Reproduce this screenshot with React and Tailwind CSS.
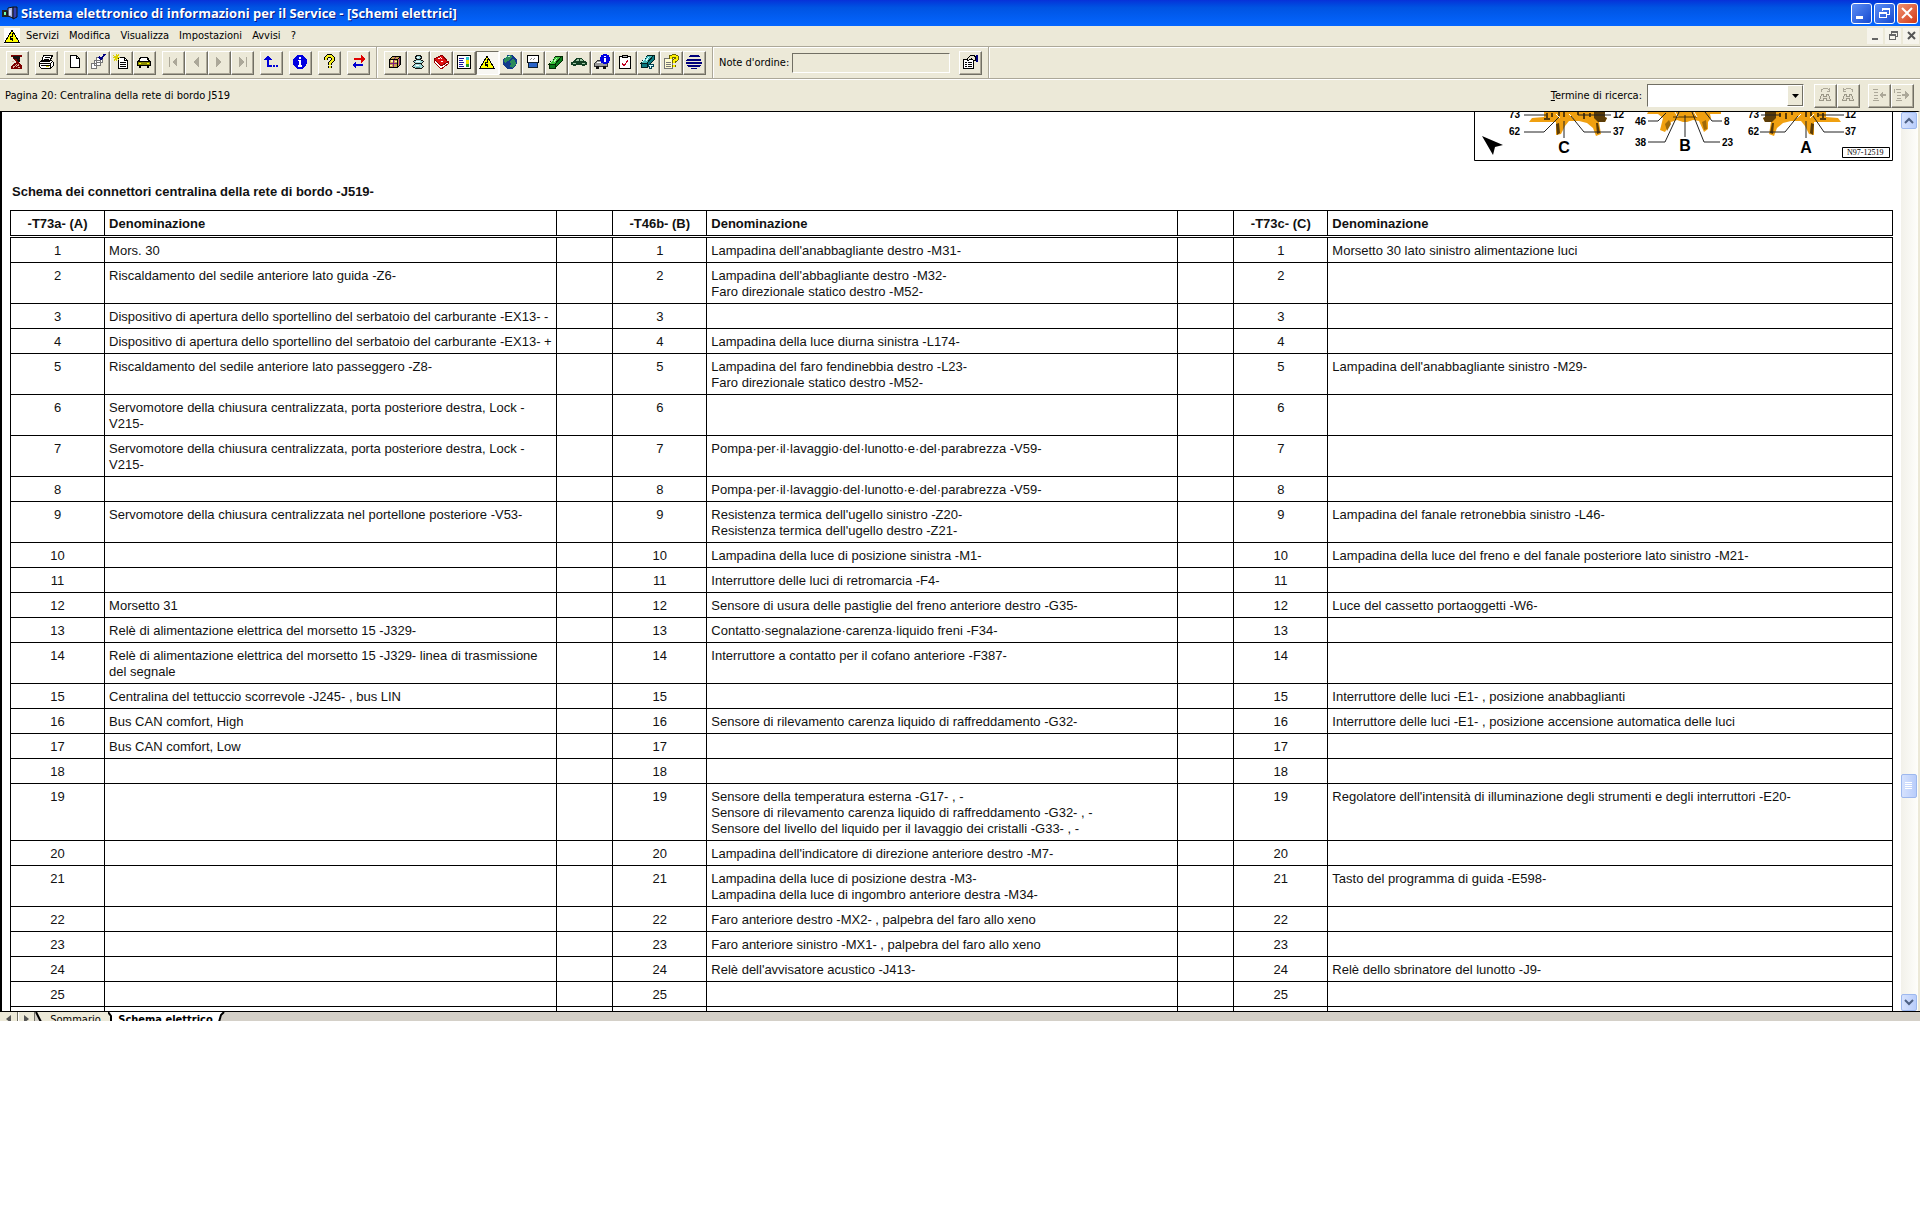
import clsx from 'clsx'

const rows = [
  ['1', ['Mors. 30'], ["Lampadina dell'anabbagliante destro -M31-"], ['Morsetto 30 lato sinistro alimentazione luci']],
  ['2', ['Riscaldamento del sedile anteriore lato guida -Z6-'], ["Lampadina dell'abbagliante destro -M32-", 'Faro direzionale statico destro -M52-'], []],
  ['3', ['Dispositivo di apertura dello sportellino del serbatoio del carburante -EX13- -'], [], []],
  ['4', ['Dispositivo di apertura dello sportellino del serbatoio del carburante -EX13- +'], ['Lampadina della luce diurna sinistra -L174-'], []],
  ['5', ['Riscaldamento del sedile anteriore lato passeggero -Z8-'], ['Lampadina del faro fendinebbia destro -L23-', 'Faro direzionale statico destro -M52-'], ["Lampadina dell'anabbagliante sinistro -M29-"]],
  ['6', ['Servomotore della chiusura centralizzata, porta posteriore destra, Lock -', 'V215-'], [], []],
  ['7', ['Servomotore della chiusura centralizzata, porta posteriore destra, Lock -', 'V215-'], ['Pompa·per·il·lavaggio·del·lunotto·e·del·parabrezza -V59-'], []],
  ['8', [], ['Pompa·per·il·lavaggio·del·lunotto·e·del·parabrezza -V59-'], []],
  ['9', ['Servomotore della chiusura centralizzata nel portellone posteriore -V53-'], ["Resistenza termica dell'ugello sinistro -Z20-", "Resistenza termica dell'ugello destro -Z21-"], ['Lampadina del fanale retronebbia sinistro -L46-']],
  ['10', [], ['Lampadina della luce di posizione sinistra -M1-'], ['Lampadina della luce del freno e del fanale posteriore lato sinistro -M21-']],
  ['11', [], ['Interruttore delle luci di retromarcia -F4-'], []],
  ['12', ['Morsetto 31'], ['Sensore di usura delle pastiglie del freno anteriore destro -G35-'], ['Luce del cassetto portaoggetti -W6-']],
  ['13', ['Relè di alimentazione elettrica del morsetto 15 -J329-'], ['Contatto·segnalazione·carenza·liquido freni -F34-'], []],
  ['14', ['Relè di alimentazione elettrica del morsetto 15 -J329- linea di trasmissione', 'del segnale'], ['Interruttore a contatto per il cofano anteriore -F387-'], []],
  ['15', ['Centralina del tettuccio scorrevole -J245- , bus LIN'], [], ['Interruttore delle luci -E1- , posizione anabbaglianti']],
  ['16', ['Bus CAN comfort, High'], ['Sensore di rilevamento carenza liquido di raffreddamento -G32-'], ['Interruttore delle luci -E1- , posizione accensione automatica delle luci']],
  ['17', ['Bus CAN comfort, Low'], [], []],
  ['18', [], [], []],
  ['19', [], ['Sensore della temperatura esterna -G17- , -', 'Sensore di rilevamento carenza liquido di raffreddamento -G32- , -', 'Sensore del livello del liquido per il lavaggio dei cristalli -G33- , -'], ["Regolatore dell'intensità di illuminazione degli strumenti e degli interruttori -E20-"]],
  ['20', [], ["Lampadina dell'indicatore di direzione anteriore destro -M7-"], []],
  ['21', [], ['Lampadina della luce di posizione destra -M3-', 'Lampadina della luce di ingombro anteriore destra -M34-'], ['Tasto del programma di guida -E598-']],
  ['22', [], ['Faro anteriore destro -MX2- , palpebra del faro allo xeno'], []],
  ['23', [], ['Faro anteriore sinistro -MX1- , palpebra del faro allo xeno'], []],
  ['24', [], ["Relè dell'avvisatore acustico -J413-"], ['Relè dello sbrinatore del lunotto -J9-']],
  ['25', [], [], []],
]

const icons = {
  exit: (
    <>
      <path d="M2 1h11v2h-2v2l-2 3 2 2 2 2v3H2v-3l4-3 1-1-3-3V3H2z" fill="#7b0000" />
      <path d="M4 2h7v3L9 6 4 4zM8 6h3v2H9z" fill="#111" />
      <path d="M3 7.500h2M10 10.500L7 13M4 13.500l4-3M9 13.500h2" stroke="#ddb0a0" />
    </>
  ),
  print: (
    <>
      <path d="M5.500 1.500h9l-3 6h-8zM1.500 8.500l3-2h9l2 2v3l-3 3h-9l-2-2z" fill="#fff" stroke="#000" />
      <path d="M7 3.500h5M6 5.500h5M2 9.500h10l3-2M3 11.500h9M12.500 9v5" stroke="#000" fill="none" />
      <path d="M8 12.500h3" stroke="#cc0" />
    </>
  ),
  page: <path d="M3.500 1.500h6l3 3v9h-9zM9.500 1.500v3h3" fill="#fff" stroke="#000" />,
  stack: (
    <>
      <path d="M6.500 3.500h6v5h-6zM4.500 6.500h6v5h-6zM1.500 9.500h5v5h-5z" fill="#fff" stroke="#777" />
      <path d="M9 3l2 2 4-5" stroke="#000080" strokeWidth="2" fill="none" />
    </>
  ),
  newDoc: (
    <>
      <path d="M5.500 3.500h6l3 3v8h-9z" fill="#fff" stroke="#000" />
      <path d="M11.500 3.500v3h3M7 8.500h6M7 10.500h6M7 12.500h6" stroke="#000" fill="none" />
      <path d="M0 1l6 5M6 0L1 7M3.500 0v7M0 3.500h7" stroke="#dcd000" />
    </>
  ),
  car: (
    <>
      <path d="M4 3h8l2 4h1v5h-2v2h-2v-2H5v2H3v-2H1V7h1z" fill="#000" />
      <path d="M5 4h6l1 3H4z" fill="#fff" />
      <path d="M2 8h12v3H2z" fill="#8a8a00" />
      <path d="M3 9.500h2M11 9.500h2" stroke="#ff0" />
    </>
  ),
  first: <path d="M4 3h1v10H4zM12 3v10L7 8z" fill="#aca899" />,
  prev: <path d="M11 3v10L5 8z" fill="#aca899" />,
  next: <path d="M5 3l6 5-6 5z" fill="#aca899" />,
  last: <path d="M12 3h1v10h-1zM5 3l5 5-5 5z" fill="#aca899" />,
  up: (
    <>
      <path d="M5 5v7h4" stroke="#0000d8" strokeWidth="2" fill="none" />
      <path d="M1 6l4-5 4 5zM10 11h2v2h-2zM13 11h2v2h-2z" fill="#0000d8" />
    </>
  ),
  info: (
    <>
      <circle cx="8" cy="8" r="7" fill="#0000e0" />
      <path d="M7 3h2v2H7zM6 6h3v5h1v2H6v-2h1V7H6z" fill="#fff" />
    </>
  ),
  help: (
    <>
      <path d="M5 6V4l2-2h3l2 2v2l-3 3v2M9 12v2" stroke="#000" strokeWidth="4" fill="none" />
      <path d="M5 6V4l2-2h3l2 2v2l-3 3v2M9 12v2" stroke="#f5ee20" strokeWidth="2" fill="none" />
    </>
  ),
  swap: (
    <>
      <path d="M4 4h7V1l4 4-4 4V6H4z" fill="#e00000" />
      <path d="M13 10H6V8l-4 3 4 4v-3h7z" fill="#0000d0" />
    </>
  ),
  box: (
    <>
      <path d="M2.500 5.500l3-3h8v8l-3 3h-8z" fill="#c9a04e" stroke="#000" />
      <path d="M2.500 5.500h8v8M10.500 5.500l3-3" stroke="#000" fill="none" />
      <path d="M3 9.500h7M6.500 6v7M9 3L6.500 5.500M12.500 4v7" stroke="#7d1c7d" />
      <path d="M4 6h2v2H4zM8 7h2v1H8zM3 11h2v1H3z" fill="#fff6b0" />
    </>
  ),
  person: (
    <>
      <path d="M6.500 1.500h4l1 2-1 2h-4l-1-2zM3.500 7.500l3-2h4l3 2-2 2h-6zM5.500 9.500h5l3 3-2 2h-6l-3-2z" fill="#9fd8d8" stroke="#111" />
      <path d="M6 7.500h4M6 11.500h3M7 3.500h2" stroke="#fff" />
      <path d="M6 13.500h4" stroke="#4d9090" />
    </>
  ),
  book: (
    <>
      <path d="M1 5v3l7 7 7-5V8l-7 4z" fill="#fff" stroke="#a00000" />
      <path d="M1 5l8-4 6 7-7 4z" fill="#e01010" stroke="#800" />
      <path d="M5 5l2-1M8 8l2-1M7 3l2 2" stroke="#fff" />
    </>
  ),
  list: (
    <>
      <path d="M1.500 1.500h13v13h-13z" fill="#fff" stroke="#000" />
      <path d="M3 4.500h5M3 6.500h4M3 8.500h5M3 10.500h4M3 12.500h5" stroke="#1a1aa0" />
      <path d="M10 3h3v3h-3z" fill="#2cc7c7" />
      <path d="M10 6h3v4h-3z" fill="#efe600" />
      <path d="M10 10h3v3h-3z" fill="#1c9b2c" />
    </>
  ),
  warning: (
    <>
      <path d="M8 2l7 12H1z" fill="#ffff00" stroke="#000" />
      <path d="M8.500 5v3h-2v2h2v3M6 11.500h3" stroke="#000" fill="none" />
    </>
  ),
  globe: (
    <>
      <circle cx="8" cy="8" r="7" fill="#123a8c" />
      <path d="M4 3l4-2 2 2-2 3-3 1-1 3-2-2V6zM10 5l3 1 1 4-3 4-3-1 1-3-2-2z" fill="#2c8c5a" />
      <path d="M3 4l2-2M6 2.500h2" stroke="#bff0e0" />
    </>
  ),
  monitor: (
    <>
      <path d="M2.500 1.500h11v7h-11z" fill="#fff" stroke="#000" />
      <path d="M3.500 8.500h9v5h-9z" fill="#2a64c8" stroke="#123" />
      <path d="M5 6l2-2M8 6l2-2" stroke="#888" />
    </>
  ),
  greenBook: (
    <>
      <path d="M1 10l7-8h6l-7 8z" fill="#3cc43c" stroke="#022b02" />
      <path d="M1 10h6v4H1zM7 10l7-8 1 4-8 8z" fill="#0b7a1b" stroke="#022b02" />
      <path d="M6 4l-4 5M9 4l-3 4" stroke="#c7f0c0" />
    </>
  ),
  greenCar: (
    <>
      <path d="M0 8l3-1 2-3h6l2 3 3 1v3h-2v1h-3v-1H5v1H2v-1H0z" fill="#123f22" />
      <path d="M6 5h2v2H5zM9 5h2l1 2H9zM2 9h3v1H2zM11 9h3v1h-3z" fill="#9fc6a5" />
    </>
  ),
  carInfo: (
    <>
      <path d="M.5 9.500l3-3h6l4 3v3H.5z" fill="#999" stroke="#333" />
      <path d="M2 12h3v3H2zM9 12h3v3H9z" fill="#111" />
      <path d="M3 8.500h5" stroke="#fff" />
      <circle cx="11" cy="5" r="5" fill="#0000e0" />
      <path d="M10 2h2v1h-2zM10 4h2v4h-2z" fill="#fff" />
    </>
  ),
  checklist: (
    <>
      <path d="M2.500 2.500h11v12h-11z" fill="#fff" stroke="#000" />
      <path d="M5.500 1.500h5v2h-5z" fill="#bbb" stroke="#000" />
      <path d="M5 9l2 3 4-6" stroke="#c00020" fill="none" />
    </>
  ),
  tealBook: (
    <>
      <path d="M1 9l7-8h6l-7 8z" fill="#46b8b8" stroke="#022" />
      <path d="M1 9h6v4H1zM7 9l7-8 1 4-8 8z" fill="#0a7a80" stroke="#022" />
      <path d="M6 3L2 8M9 3L6 7" stroke="#d7ffff" />
      <path d="M8.500 10.500h5v2h-2v2h-2v-2h-1z" fill="#dff" stroke="#045" />
    </>
  ),
  helpDoc: (
    <>
      <path d="M1.500 4.500h8v10h-8z" fill="#fffbd0" stroke="#777" />
      <path d="M3 8.500h5M3 10.500h5M3 12.500h5" stroke="#777" />
      <path d="M8 5V3l2-1h2l2 1v2l-3 2v2M11 11v2" stroke="#6b6400" strokeWidth="4" fill="none" />
      <path d="M8 5V3l2-1h2l2 1v2l-3 2v2M11 11v2" stroke="#fff200" strokeWidth="2" fill="none" />
    </>
  ),
  stripes: <path d="M4 1h8l2 2H2zM1 5h14v2H0zM0 8h16v2H0zM1 11h14l-1 2H2zM4 14h8l-2 1H6z" fill="#00007c" />,
  note: (
    <>
      <path d="M1.500 5.500h10v9h-10z" fill="#fff" stroke="#000" />
      <path d="M3 8.500h2M6 8.500h4M3 10.500h2M6 10.500h4M3 12.500h2M6 12.500h4" stroke="#000" />
      <path d="M4.500 5.500l4-4h4l1 2v3h-2l-2-2-3 2z" fill="#e8e4d0" stroke="#000" />
      <path d="M14 1h2v7h-2z" fill="#000080" />
    </>
  ),
  findNext: (
    <>
      <path d="M4.500 5V3l2-1.500h4l2 1.500M12.500 1v3.500H10" stroke="#aca899" fill="none" />
      <path d="M4.500 7.500h2v2h3v-2h2l2 6h-4v-2h-3v2h-4z" fill="#e4e0d0" stroke="#9c9888" />
    </>
  ),
  findPrev: (
    <>
      <path d="M12.500 5V3l-2-1.500h-4L4 3M3.500 1v3.500H6" stroke="#aca899" fill="none" />
      <path d="M4.500 7.500h2v2h3v-2h2l2 6h-4v-2h-3v2h-4z" fill="#e4e0d0" stroke="#9c9888" />
    </>
  ),
  outdent: (
    <>
      <path d="M2 2.500h5M3 5.500h4M3 8.500h4M3 11.500h4M2 13.500h6" stroke="#aca899" />
      <path d="M8 8l4-4v3h3v2h-3v3z" fill="#aca899" />
    </>
  ),
  indent: (
    <>
      <path d="M2 2.500h5M3 5.500h4M3 8.500h4M3 11.500h4M2 13.500h6M.5 2v4" stroke="#aca899" />
      <path d="M15 8l-4-4v3H8v2h3v3z" fill="#aca899" />
    </>
  ),
}

const mainGroups = [
  [['exit', 'Esci']],
  [['print', 'Stampa']],
  [['page', 'Nuovo'], ['stack', 'Selezione'], ['newDoc', 'Nuovo documento'], ['car', 'Veicolo']],
  [['first', 'Primo'], ['prev', 'Precedente'], ['next', 'Successivo'], ['last', 'Ultimo']],
  [['up', 'Livello superiore']],
  [['info', 'Informazioni']],
  [['help', 'Guida']],
  [['swap', 'Scambia']],
]

const serviceButtons = [
  ['box', 'Ricambi'],
  ['person', 'Cliente'],
  ['book', 'Manuale'],
  ['list', 'Elenco'],
  ['warning', 'Schemi elettrici'],
  ['globe', 'Rete'],
  ['monitor', 'Diagnosi'],
  ['greenBook', 'Riparazioni'],
  ['greenCar', 'Carrozzeria'],
  ['carInfo', 'Dati veicolo'],
  ['checklist', 'Manutenzione'],
  ['tealBook', 'Attrezzi'],
  ['helpDoc', 'Assistenza'],
  ['stripes', 'Altro'],
]

function Icon({ name }) {
  return (
    <svg viewBox="0 0 16 16" className="w-4 h-4 shrink-0" shapeRendering="crispEdges" aria-hidden="true">
      {icons[name]}
    </svg>
  )
}

function ToolButton({ icon, label, pressed }) {
  return (
    <button
      aria-label={label}
      className={clsx(
        'w-[23px] h-6 flex items-center pl-[2px] pb-[2px] border shrink-0',
        pressed
          ? 'bg-[#f8f7f2] border-t-[#716f64] border-l-[#716f64] border-r-white border-b-white'
          : 'bg-[#ece9d8] border-t-white border-l-white border-r-[#716f64] border-b-[#716f64] shadow-[inset_-1px_-1px_0_#aca899]',
      )}
    >
      <Icon name={icon} />
    </button>
  )
}

function Separator() {
  return <div className="w-[2px] self-stretch bg-white border-l border-[#aca899] shrink-0" />
}

function TitleBar() {
  const box = 'w-[21px] h-[21px] rounded-[3px] border border-white flex items-center justify-center'
  return (
    <div className="h-[26px] flex items-center pl-[2px] pr-[2px] bg-linear-to-b from-[#0831d9] via-[#0054e3] via-30% to-[#0566ff]">
      <svg viewBox="0 0 16 16" className="w-4 h-4" aria-hidden="true">
        <path d="M0 5h5l2 3v4H0z" fill="#222" />
        <path d="M2 7h2v3H2z" fill="#7fa" />
        <path d="M6 3l5-1v11l-5-2z" fill="#aab4e8" stroke="#111" />
        <path d="M11 2h4v10l-4 2z" fill="#3340b0" stroke="#111" />
        <path d="M8 5v5" stroke="#fff" />
      </svg>
      <h1 className="ml-[3px] text-white text-[13px] leading-5 font-bold font-['Open_Sans','Noto_Sans',sans-serif] [text-shadow:1px_1px_0_#0a1883]">
        Sistema elettronico di informazioni per il Service - [Schemi elettrici]
      </h1>
      <div className="ml-auto flex gap-[2px]">
        <button aria-label="Riduci a icona" className={clsx(box, 'bg-linear-to-br from-[#5c8df5] to-[#1648d0]')}>
          <svg viewBox="0 0 19 19" className="w-[19px] h-[19px]"><path d="M4 12h7v3H4z" fill="#fff" /></svg>
        </button>
        <button aria-label="Ripristina" className={clsx(box, 'bg-linear-to-br from-[#5c8df5] to-[#1648d0]')}>
          <svg viewBox="0 0 19 19" className="w-[19px] h-[19px]" shapeRendering="crispEdges">
            <path d="M7.500 7V4.500h7v6H12M4.500 8.500h7v5h-7zM4 9.500h8M7 5.500h8" stroke="#fff" fill="none" />
          </svg>
        </button>
        <button aria-label="Chiudi" className={clsx(box, 'bg-linear-to-br from-[#f0906f] to-[#d0340c]')}>
          <svg viewBox="0 0 19 19" className="w-[19px] h-[19px]"><path d="M4 4l10 10M14 4L4 14" stroke="#fff" strokeWidth="2" /></svg>
        </button>
      </div>
    </div>
  )
}

function MenuBar() {
  const box = 'w-4 h-4 bg-[#f6f4ec] flex items-center justify-center'
  return (
    <div className="h-5 flex items-center pl-1 pr-px bg-[#ece9d8]">
      <span className="w-4 h-4 bg-white"><Icon name="warning" /></span>
      <nav className="flex gap-[10px] ml-[6px]">
        {['Servizi', 'Modifica', 'Visualizza', 'Impostazioni', 'Avvisi', '?'].map((item) => (
          <button key={item}>{item}</button>
        ))}
      </nav>
      <div className="ml-auto flex gap-[2px]">
        <button aria-label="Riduci a icona pagina" className={box}>
          <svg viewBox="0 0 16 16" className="w-4 h-4"><path d="M5 10h6v2H5z" fill="#666" /></svg>
        </button>
        <button aria-label="Ripristina pagina" className={box}>
          <svg viewBox="0 0 16 16" className="w-4 h-4" shapeRendering="crispEdges">
            <path d="M6.500 6V3.500h6v5H11M4.500 6.500h6v5h-6zM4 7.500h7M6 4.500h7" stroke="#666" fill="none" />
          </svg>
        </button>
        <button aria-label="Chiudi pagina" className={box}>
          <svg viewBox="0 0 16 16" className="w-4 h-4"><path d="M5 4l7 7M12 4l-7 7" stroke="#555" strokeWidth="2" /></svg>
        </button>
      </div>
    </div>
  )
}

function Toolbar() {
  return (
    <div className="h-[33px] flex items-center border-t border-b border-[#aca899] bg-[#ece9d8] shadow-[inset_0_1px_0_#fff]">
      <div className="flex gap-[6px] pl-[6px] pr-[6px]">
        {mainGroups.map((group) => (
          <div key={group[0][0]} className="flex">
            {group.map(([icon, label]) => <ToolButton key={icon} icon={icon} label={label} />)}
          </div>
        ))}
      </div>
      <Separator />
      <div className="flex px-[6px]">
        {serviceButtons.map(([icon, label]) => (
          <ToolButton key={icon} icon={icon} label={label} pressed={icon === 'warning'} />
        ))}
      </div>
      <Separator />
      <label htmlFor="order-note" className="ml-[5px] w-[73px]">Note d'ordine:</label>
      <input
        id="order-note"
        className="w-[158px] h-5 px-1 mr-[9px] bg-[#ece9d8] border border-t-[#716f64] border-l-[#716f64] border-r-white border-b-white"
      />
      <ToolButton icon="note" label="Modifica nota" />
      <div className="w-[6px]" />
      <Separator />
    </div>
  )
}

function SearchBar() {
  return (
    <div className="h-8 flex items-center pl-[5px] pr-[6px] bg-[#ece9d8] border-t border-white">
      <p>Pagina 20: Centralina della rete di bordo J519</p>
      <label htmlFor="search-term" className="ml-auto mr-[5px]"><span className="underline">T</span>ermine di ricerca:</label>
      <div className="w-[157px] h-[23px] flex bg-white border border-t-[#716f64] border-l-[#716f64] border-r-white border-b-white">
        <input id="search-term" className="flex-1 min-w-0 px-1" />
        <button
          aria-label="Mostra termini"
          className="w-4 flex items-center justify-center bg-[#ece9d8] border border-t-white border-l-white border-r-[#716f64] border-b-[#716f64]"
        >
          <svg viewBox="0 0 7 4" className="w-[7px] h-1 shrink-0"><path d="M0 0h7L3.500 4z" /></svg>
        </button>
      </div>
      <div className="flex ml-[10px]">
        <ToolButton icon="findNext" label="Trova successivo" />
        <ToolButton icon="findPrev" label="Trova precedente" />
      </div>
      <div className="flex ml-2">
        <ToolButton icon="outdent" label="Indietro" />
        <ToolButton icon="indent" label="Avanti" />
      </div>
    </div>
  )
}

function SidePlug() {
  return (
    <>
      <path d="M-20 0h60v5l3 1-2 4h-6l2 12-5 2-3-8-6-5-8-2H5l-4 5-4 8-5 1V10h-27l3-4 12-1z" fill="#f0a010" />
      <path d="M30 0h11v5l2 1-2 4h-7l-4-4zM-8 12l3-1 1 10-3 2zM32 11l2 0 2 10-3 1z" fill="#5b3c08" />
      <path d="M-17 1v6M-12 1v4M-5 0v4M0 0v5M14 0v3M20 1v6M26 1v4M-20 7h6" stroke="#5b3c08" strokeWidth="2" />
      <path d="M-8 2l4 4M5 2l4 4" stroke="#fff" />
    </>
  )
}

function ConnectorDrawing() {
  return (
    <svg viewBox="0 0 419 49" className="w-[419px] h-[49px] ml-auto" fontFamily="Liberation Sans, Arial, sans-serif" fontWeight="700" fontSize="10">
      <g transform="translate(90 0)"><SidePlug /></g>
      <g transform="translate(332 0) scale(-1 1)"><SidePlug /></g>
      <g transform="translate(211 0)">
        <path d="M-37 0h73v2H25l1 4-3 4 0 7-4 3-5-11-6-1-6 2h-4l-6-2-6 2-6 10-5-2 3-12-5-4h-11z" fill="#f0a010" />
        <path d="M-20 12l4-4 2 4-4 7zM17 10l4-2 1 9-3 1zM-12 4h24v2h-24z" fill="#a06a08" />
        <path d="M-10 0l3 5M9 0l3 5" stroke="#fff" />
      </g>
      <path
        d="M50 3h22M104 3h33M50 20h20l15-15M90 9v17M97 4l13 16h27M174 9h10l8-8M174 30h17l14-30M211 3v22M218 0l12 30h16M231 0l7 9h10M287 3h20M345 3h25M286 20h25l13-16M332 9v17M339 4l11 16h20"
        stroke="#222"
        fill="none"
      />
      <path d="M8 24l21 9-8 2-2 8z" />
      <g>
        <text x="35" y="6">73</text>
        <text x="35" y="23">62</text>
        <text x="139" y="6">12</text>
        <text x="139" y="23">37</text>
        <text x="161" y="13">46</text>
        <text x="161" y="34">38</text>
        <text x="250" y="13">8</text>
        <text x="248" y="34">23</text>
        <text x="274" y="6">73</text>
        <text x="274" y="23">62</text>
        <text x="371" y="6">12</text>
        <text x="371" y="23">37</text>
      </g>
      <g fontSize="16" textAnchor="middle">
        <text x="90" y="41">C</text>
        <text x="211" y="39">B</text>
        <text x="332" y="41">A</text>
      </g>
      <path d="M368.500 35.500h47v10h-47z" fill="#fff" stroke="#000" />
      <text x="373" y="43" fontSize="8" fontWeight="400" fontFamily="Liberation Serif, serif">N97-12519</text>
      <path d="M.5 0v48.500h418V0" fill="none" stroke="#000" />
    </svg>
  )
}

function Lines({ lines }) {
  return lines.map((line) => <div key={line} className="whitespace-nowrap">{line}</div>)
}

function ConnectorTable() {
  const num = 'border border-black pt-[5px] pb-[3px] text-center align-top'
  const name = 'border border-black pt-[5px] pb-[3px] px-1 text-left align-top'
  const head = 'h-[26px] pt-[2px] align-middle font-bold border border-b-[3px] border-black [border-bottom-style:double]'
  return (
    <table className="w-full table-fixed border-collapse">
      <colgroup>
        <col className="w-[5%]" />
        <col className="w-[24%]" />
        <col className="w-[3%]" />
        <col className="w-[5%]" />
        <col className="w-[25%]" />
        <col className="w-[3%]" />
        <col className="w-[5%]" />
        <col className="w-[30%]" />
      </colgroup>
      <thead>
        <tr>
          <th className={head}>-T73a- (A)</th>
          <th className={clsx(head, 'px-1 text-left')}>Denominazione</th>
          <th className={head} />
          <th className={head}>-T46b- (B)</th>
          <th className={clsx(head, 'px-1 text-left')}>Denominazione</th>
          <th className={head} />
          <th className={head}>-T73c- (C)</th>
          <th className={clsx(head, 'px-1 text-left')}>Denominazione</th>
        </tr>
      </thead>
      <tbody>
        {rows.map(([pin, a, b, c]) => (
          <tr key={pin}>
            <td className={num}>{pin}</td>
            <td className={name}><Lines lines={a} /></td>
            <td className={num} />
            <td className={num}>{pin}</td>
            <td className={name}><Lines lines={b} /></td>
            <td className={num} />
            <td className={num}>{pin}</td>
            <td className={name}><Lines lines={c} /></td>
          </tr>
        ))}
        {/* next row, just coming into view */}
        <tr className="h-1">
          {Array.from({ length: 8 }, (_, i) => (
            <td key={i} className="border border-b-0 border-black" />
          ))}
        </tr>
      </tbody>
    </table>
  )
}

function ScrollBar() {
  const box = 'w-4 rounded-[2px] border border-[#9db8ee] bg-linear-to-r from-[#d6e2fd] to-[#b9cdfb] flex items-center justify-center shrink-0'
  return (
    <div className="w-[17px] flex flex-col bg-linear-to-r from-[#f2f1ea] to-[#fefefb]">
      <button aria-label="Scorri su" className={clsx(box, 'h-[17px]')}>
        <svg viewBox="0 0 10 8" className="w-[10px] h-2"><path d="M1 6l4-4 4 4" stroke="#4d6185" strokeWidth="2" fill="none" /></svg>
      </button>
      <div className="grow-[645]" />
      <div className={clsx(box, 'h-6')}>
        <svg viewBox="0 0 8 8" className="w-2 h-2" shapeRendering="crispEdges"><path d="M0 .5h7M0 2.500h7M0 4.500h7M0 6.500h7" stroke="#fff" /></svg>
      </div>
      <div className="grow-[196]" />
      <button aria-label="Scorri giù" className={clsx(box, 'h-[17px]')}>
        <svg viewBox="0 0 10 8" className="w-[10px] h-2"><path d="M1 2l4 4 4-4" stroke="#4d6185" strokeWidth="2" fill="none" /></svg>
      </button>
    </div>
  )
}

function SheetTabs() {
  return (
    <div className="h-[10px] flex items-start overflow-hidden border-t border-black bg-[#d4d0c8]">
      <button aria-label="Scheda precedente" className="w-[18px] h-4 pt-[3px] flex justify-center bg-[#ece9d8] border-r border-[#716f64]">
        <svg viewBox="0 0 5 8" className="w-[5px] h-2"><path d="M5 0v8L0 4z" fill="#555" /></svg>
      </button>
      <button aria-label="Scheda successiva" className="w-[17px] h-4 pt-[3px] flex justify-center bg-[#ece9d8] border-x border-l-white border-r-[#716f64]">
        <svg viewBox="0 0 5 8" className="w-[5px] h-2"><path d="M0 0v8l5-4z" fill="#555" /></svg>
      </button>
      <svg viewBox="0 0 8 10" className="w-2 h-[10px]">
        <path d="M2 0h6v10z" fill="#ece9d8" />
        <path d="M1 0l5 10" stroke="#000" strokeWidth="2" />
      </svg>
      <button className="h-4 w-[65px] bg-[#ece9d8] leading-4">Sommario</button>
      <svg viewBox="0 0 8 10" className="w-2 h-[10px]">
        <path d="M0 0h8v10H0z" fill="#fff" />
        <path d="M0 0l4 10H0z" fill="#ece9d8" />
        <path d="M0 0l3 4v6" stroke="#000" strokeWidth="2" fill="none" />
      </svg>
      <button className="h-4 w-[99px] bg-white leading-4 font-bold">Schema elettrico</button>
      <svg viewBox="0 0 10 10" className="w-[10px] h-[10px]">
        <path d="M0 0h9L4 10H0z" fill="#fff" />
        <path d="M9 0L6 3 4 10" stroke="#000" strokeWidth="2" fill="none" />
      </svg>
    </div>
  )
}

export default function App() {
  return (
    <div className="min-h-screen bg-white text-black text-[11px] leading-4 font-['DejaVu_Sans_Condensed','Open_Sans',sans-serif]">
      <TitleBar />
      <MenuBar />
      <Toolbar />
      <SearchBar />
      <main className="flex border-t border-l-2 border-black border-r-2 border-r-[#ece9d8]">
        <div className="flex-1 min-w-0 pl-2 pr-[8px] text-[13px] leading-4 text-[#111] font-['Liberation_Sans',Arial,sans-serif]">
          <ConnectorDrawing />
          <h2 className="mt-[23px] mb-[10px] pl-[2px] font-bold">Schema dei connettori centralina della rete di bordo -J519-</h2>
          <ConnectorTable />
        </div>
        <ScrollBar />
      </main>
      <SheetTabs />
    </div>
  )
}
